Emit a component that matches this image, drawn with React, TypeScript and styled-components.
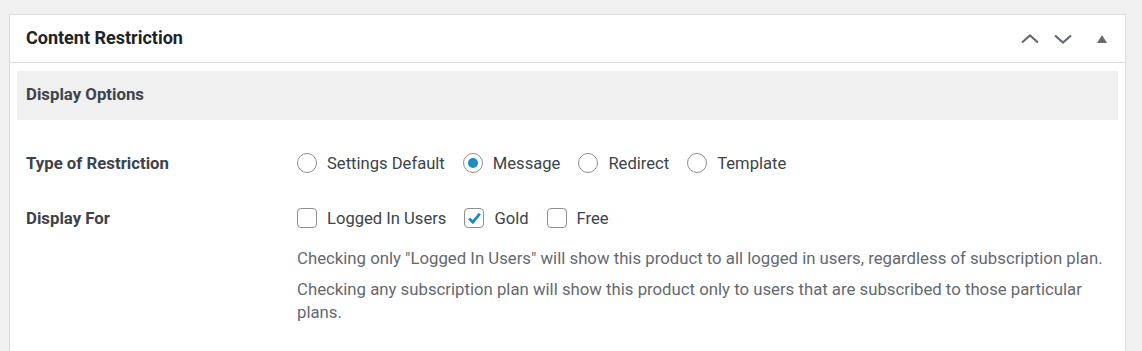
import styled, {createGlobalStyle} from 'styled-components';

const GlobalStyle = createGlobalStyle`
    body {
        margin: 0;
        background: #f0f0f1;
        font-family: Roboto, "Noto Sans", sans-serif;
        color: #3c434a;
    }
`;

const restrictionTypes = [
    {label: 'Settings Default', checked: false},
    {label: 'Message', checked: true},
    {label: 'Redirect', checked: false},
    {label: 'Template', checked: false},
];

const plans = [
    {label: 'Logged In Users', checked: false},
    {label: 'Gold', checked: true},
    {label: 'Free', checked: false},
];

const App = () => {
    return <Page>
        <GlobalStyle/>
        <Postbox>
            <PostboxHeader>
                <Title>Content Restriction</Title>
                <Handles>
                    <HandleButton aria-label="Move up">
                        <svg width="20" height="20" viewBox="0 0 20 20">
                            <path d="M2 13.5 L10 6.5 L18 13.5" fill="none" stroke="#646970" strokeWidth="2.2"/>
                        </svg>
                    </HandleButton>
                    <HandleButton aria-label="Move down">
                        <svg width="20" height="20" viewBox="0 0 20 20">
                            <path d="M2 6.5 L10 13.5 L18 6.5" fill="none" stroke="#646970" strokeWidth="2.2"/>
                        </svg>
                    </HandleButton>
                    <HandleButton aria-label="Toggle panel" $wide>
                        <svg width="12" height="10" viewBox="0 0 12 10">
                            <path d="M6 1 L11 9 L1 9 Z" fill="#646970"/>
                        </svg>
                    </HandleButton>
                </Handles>
            </PostboxHeader>

            <Inside>
                <SectionBar>Display Options</SectionBar>

                <FieldRow>
                    <FieldLabel>Type of Restriction</FieldLabel>
                    <FieldBody>
                        <OptionList>
                            {restrictionTypes.map((item) => (
                                <Option key={item.label}>
                                    <Radio $checked={item.checked}/>
                                    {item.label}
                                </Option>
                            ))}
                        </OptionList>
                    </FieldBody>
                </FieldRow>

                <FieldRow>
                    <FieldLabel>Display For</FieldLabel>
                    <FieldBody>
                        <OptionList>
                            {plans.map((item) => (
                                <Option key={item.label}>
                                    <Checkbox $checked={item.checked}>
                                        {item.checked && (
                                            <svg width="17" height="17" viewBox="0 0 16 16">
                                                <path d="M3 8 L6.5 11.5 L13 3.5" fill="none" stroke="#1e8cbe" strokeWidth="2.6"/>
                                            </svg>
                                        )}
                                    </Checkbox>
                                    {item.label}
                                </Option>
                            ))}
                        </OptionList>
                        <Description>
                            Checking only "Logged In Users" will show this product to all logged in users, regardless of subscription plan.
                        </Description>
                        <Description>
                            Checking any subscription plan will show this product only to users that are subscribed to those particular plans.
                        </Description>
                    </FieldBody>
                </FieldRow>
            </Inside>
        </Postbox>
    </Page>;
};

export default App;


const Page = styled.div`
    padding: 14px 16px 0 9px;
    height: 351px;
    box-sizing: border-box;
    overflow: hidden;
`;

const Postbox = styled.div`
    background: #fff;
    border: 1px solid #dcdcde;
    border-bottom: none;
    min-height: 340px;
`;

const PostboxHeader = styled.div`
    display: flex;
    align-items: center;
    justify-content: space-between;
    height: 47px;
    border-bottom: 1px solid #dcdcde;
    padding-left: 16px;
`;

const Title = styled.h2`
    margin: 0;
    font-size: 18px;
    font-weight: 700;
    color: #1d2327;
    padding-bottom: 3px;
`;

const Handles = styled.div`
    display: flex;
    align-items: center;
    padding-right: 0;
`;

const HandleButton = styled.button<{$wide?: boolean}>`
    display: flex;
    align-items: center;
    justify-content: center;
    width: ${(p) => (p.$wide ? '46px' : '33px')};
    height: 36px;
    padding: 0;
    border: none;
    background: none;
`;

const Inside = styled.div`
    padding: 8px 7px 20px 7px;
`;

const SectionBar = styled.div`
    display: flex;
    align-items: center;
    height: 49px;
    padding: 0 9px 3px 9px;
    box-sizing: border-box;
    background: #f0f0f1;
    font-size: 16.8px;
    font-weight: 700;
    color: #3c434a;
`;

const FieldRow = styled.div`
    display: grid;
    grid-template-columns: 271px 1fr;
    padding: 31px 9px 0 9px;

    & + & {
        padding-top: 31px;
    }
`;

const FieldLabel = styled.div`
    font-size: 16.8px;
    font-weight: 700;
    color: #3c434a;
    line-height: 24px;
`;

const FieldBody = styled.div`
    display: flex;
    flex-direction: column;
`;

const OptionList = styled.div`
    display: flex;
    align-items: center;
    gap: 18px;
    height: 24px;
`;

const Option = styled.label`
    display: flex;
    align-items: center;
    gap: 10px;
    font-size: 16.6px;
    color: #3c434a;
`;

const Radio = styled.span<{$checked?: boolean}>`
    display: flex;
    align-items: center;
    justify-content: center;
    width: 18px;
    height: 18px;
    border: 1px solid #8c8f94;
    border-radius: 50%;

    &::after {
        content: '';
        display: ${(p) => (p.$checked ? 'block' : 'none')};
        width: 10px;
        height: 10px;
        border-radius: 50%;
        background: #1e8cbe;
    }
`;

const Checkbox = styled.span<{$checked?: boolean}>`
    display: flex;
    align-items: center;
    justify-content: center;
    width: 18px;
    height: 18px;
    border: 1px solid #8c8f94;
    border-radius: 4px;
`;

const Description = styled.p`
    margin: 17px 0 0 0;
    font-size: 16.75px;
    line-height: 23px;
    color: #646970;
    max-width: 810px;

    & + & {
        margin-top: 8px;
    }
`;
